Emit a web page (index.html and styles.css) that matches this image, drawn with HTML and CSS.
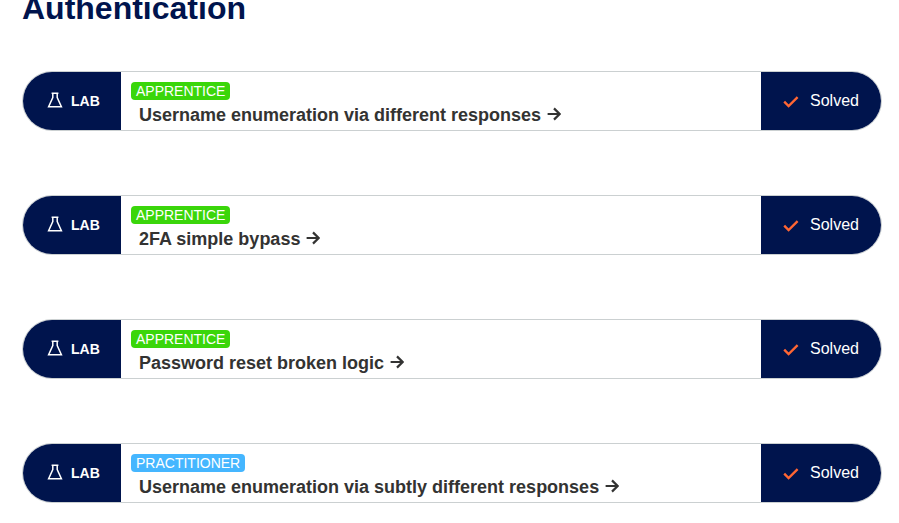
FILE: index.html
```html
<!DOCTYPE html>
<html lang="en">
<head>
<meta charset="utf-8">
<title>Authentication</title>
<link rel="stylesheet" href="styles.css">
</head>
<body>
<main class="page">
  <h1 class="title">Authentication</h1>
  <div class="list">
    <div class="row">
      <div class="lab"><svg class="flask" viewBox="0 0 16 16"><path d="M4.6 1.2h6.8M5.8 1.2v4.4L1.6 14.8h12.8L10.2 5.6V1.2"/></svg><span>LAB</span></div>
      <div class="info">
        <span class="level apprentice">APPRENTICE</span>
        <a class="name">Username enumeration via different responses<svg class="arrow" viewBox="0 0 14 14"><path d="M.6 7h11.6M7 1.4 12.6 7 7 12.6"/></svg></a>
      </div>
      <div class="status"><svg class="check" viewBox="0 0 16 12"><path d="M1.2 5.6 5.6 10 14.6 1.2"/></svg><span>Solved</span></div>
    </div>
    <div class="row">
      <div class="lab"><svg class="flask" viewBox="0 0 16 16"><path d="M4.6 1.2h6.8M5.8 1.2v4.4L1.6 14.8h12.8L10.2 5.6V1.2"/></svg><span>LAB</span></div>
      <div class="info">
        <span class="level apprentice">APPRENTICE</span>
        <a class="name">2FA simple bypass<svg class="arrow" viewBox="0 0 14 14"><path d="M.6 7h11.6M7 1.4 12.6 7 7 12.6"/></svg></a>
      </div>
      <div class="status"><svg class="check" viewBox="0 0 16 12"><path d="M1.2 5.6 5.6 10 14.6 1.2"/></svg><span>Solved</span></div>
    </div>
    <div class="row">
      <div class="lab"><svg class="flask" viewBox="0 0 16 16"><path d="M4.6 1.2h6.8M5.8 1.2v4.4L1.6 14.8h12.8L10.2 5.6V1.2"/></svg><span>LAB</span></div>
      <div class="info">
        <span class="level apprentice">APPRENTICE</span>
        <a class="name">Password reset broken logic<svg class="arrow" viewBox="0 0 14 14"><path d="M.6 7h11.6M7 1.4 12.6 7 7 12.6"/></svg></a>
      </div>
      <div class="status"><svg class="check" viewBox="0 0 16 12"><path d="M1.2 5.6 5.6 10 14.6 1.2"/></svg><span>Solved</span></div>
    </div>
    <div class="row">
      <div class="lab"><svg class="flask" viewBox="0 0 16 16"><path d="M4.6 1.2h6.8M5.8 1.2v4.4L1.6 14.8h12.8L10.2 5.6V1.2"/></svg><span>LAB</span></div>
      <div class="info">
        <span class="level practitioner">PRACTITIONER</span>
        <a class="name">Username enumeration via subtly different responses<svg class="arrow" viewBox="0 0 14 14"><path d="M.6 7h11.6M7 1.4 12.6 7 7 12.6"/></svg></a>
      </div>
      <div class="status"><svg class="check" viewBox="0 0 16 12"><path d="M1.2 5.6 5.6 10 14.6 1.2"/></svg><span>Solved</span></div>
    </div>
  </div>
</main>
</body>
</html>
```
FILE: styles.css
```css
html, body {
  margin: 0;
  height: 100%;
  overflow: hidden;
  background: #fff;
  font-family: "Liberation Sans", Arial, sans-serif;
}
.page {
  padding: 0 17px 0 22px;
}
.title {
  margin: -11px 0 0;
  height: 82px;
  font-size: 32px;
  line-height: 38px;
  font-weight: 700;
  color: #00144d;
}
.list {
  display: flex;
  flex-direction: column;
  gap: 64px;
}
.row {
  display: flex;
  height: 60px;
  box-sizing: border-box;
  border: 1px solid #cbd0d1;
  border-radius: 30px;
  overflow: hidden;
  background: #fff;
}
.lab {
  flex: 0 0 98px;
  display: flex;
  align-items: center;
  gap: 8px;
  padding-left: 24px;
  box-sizing: border-box;
  background: #00144d;
  color: #fff;
  font-size: 14px;
  font-weight: 700;
}
.flask {
  width: 16px;
  height: 16px;
  margin-top: -3px;
  fill: none;
  stroke: #fff;
  stroke-width: 1.5;
}
.info {
  flex: 1;
  padding: 10px 10px 0;
  display: flex;
  flex-direction: column;
  align-items: flex-start;
}
.level {
  height: 18px;
  padding: 0 5px;
  border-radius: 4px;
  color: #fff;
  font-size: 14px;
  line-height: 18px;
}
.apprentice { background: #3ad60a; }
.practitioner { background: #45b6ff; }
.name {
  margin: 5px 0 0 8px;
  font-size: 18px;
  line-height: 20px;
  font-weight: 700;
  color: #333332;
  display: flex;
  align-items: center;
}
.arrow {
  width: 14px;
  height: 14px;
  margin: -2px 0 0 6px;
  fill: none;
  stroke: #333332;
  stroke-width: 2.2;
}
.status {
  flex: 0 0 120px;
  display: flex;
  align-items: center;
  gap: 11px;
  padding-left: 22px;
  box-sizing: border-box;
  background: #00144d;
  color: #fff;
  font-size: 16px;
}
.check {
  width: 16px;
  height: 12px;
  margin-top: 2px;
  fill: none;
  stroke: #ff6633;
  stroke-width: 2.4;
}
```
